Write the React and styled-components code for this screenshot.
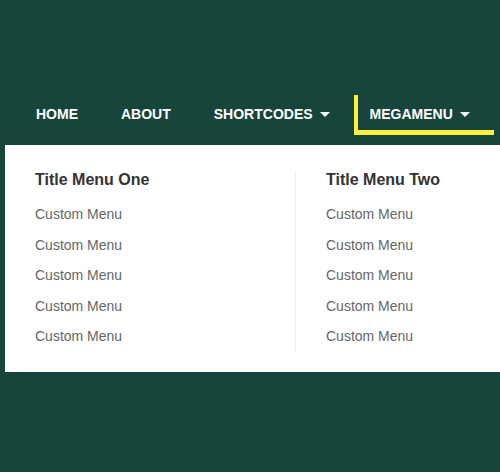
import React from "react";
import styled, { createGlobalStyle } from "styled-components";

const G = createGlobalStyle`
  html,body{margin:0;padding:0;background:#18453b;font-family:"Liberation Sans",Arial,sans-serif;overflow:hidden;}
`;
const Page = styled.div`width:500px;height:472px;padding-top:95px;box-sizing:border-box;`;
const Nav = styled.ul`display:flex;list-style:none;margin:0;padding:0 0 0 36px;height:40px;align-items:stretch;`;
const Item = styled.li`
  display:flex;align-items:center;color:#fff;font-weight:bold;font-size:14px;
  margin-right:${p=>p.$mr}px;
  ${p=>p.$active && `border-left:4px solid #fbf042;border-bottom:5px solid #fbf042;padding:0 24px 0 12px;margin-left:-16px;`}
  padding-top:3px;padding-bottom:${p=>p.$active?0:5}px;
`;
const Caret = styled.span`display:inline-block;margin-left:7px;border-left:5px solid transparent;border-right:5px solid transparent;border-top:5px solid #fff;`;
const Panel = styled.div`margin:10px 0 0 5px;background:#fff;height:227px;display:flex;padding-top:26px;box-sizing:border-box;`;
const Col = styled.div`flex:0 0 auto;width:${p=>p.$w}px;padding-left:30px;box-sizing:border-box;${p=>p.$div&&`border-right:1px solid #eee;height:180px;`}`;
const Title = styled.div`font-size:16px;font-weight:bold;color:#333;margin-bottom:10px;`;
const Link = styled.div`font-size:14px;color:#666;height:30.5px;line-height:30.5px;`;

const items = Array(5).fill("Custom Menu");
export default function App(){
  return <Page><G/>
    <Nav>
      <Item $mr={43}>HOME</Item>
      <Item $mr={43}>ABOUT</Item>
      <Item $mr={40}>SHORTCODES<Caret/></Item>
      <Item $active $mr={0}>MEGAMENU<Caret/></Item>
    </Nav>
    <Panel>
      <Col $div $w={291}><Title>Title Menu One</Title>{items.map((t,i)=><Link key={i}>{t}</Link>)}</Col>
      <Col $w={200}><Title>Title Menu Two</Title>{items.map((t,i)=><Link key={i}>{t}</Link>)}</Col>
    </Panel>
  </Page>;
}
